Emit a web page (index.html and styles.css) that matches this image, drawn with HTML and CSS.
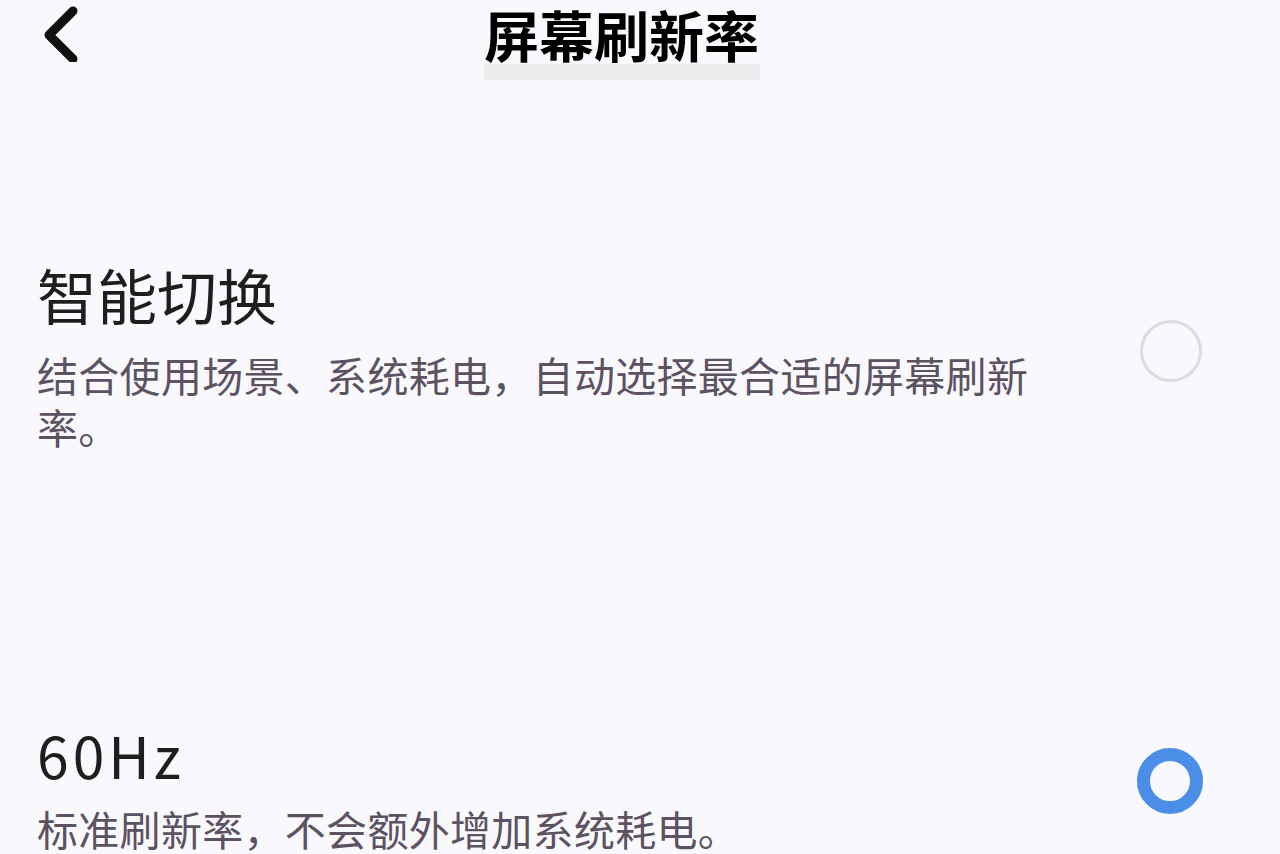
FILE: index.html
```html
<!DOCTYPE html>
<html lang="zh-CN">
<head>
    <meta charset="UTF-8">
    <meta name="viewport" content="width=device-width, initial-scale=1.0">
    <title>屏幕刷新率</title>
    <link rel="stylesheet" href="styles.css">
</head>
<body>
    <div class="screen">
        <header class="topbar">
            <button class="back" aria-label="返回">
                <svg width="36" height="56" viewBox="0 0 36 56">
                    <path d="M31 5 L7 29 L31 53" fill="none" stroke="#111" stroke-width="9" stroke-linecap="round" stroke-linejoin="round"/>
                </svg>
            </button>
            <h1 class="title">屏幕刷新率</h1>
        </header>

        <div class="options">
            <div class="option">
                <div class="option-text">
                    <h2>智能切换</h2>
                    <p>结合使用场景、系统耗电，自动选择最合适的屏幕刷新率。</p>
                </div>
                <span class="radio"></span>
            </div>
            <div class="option option-last">
                <div class="option-text">
                    <h2 class="hz">60Hz</h2>
                    <p>标准刷新率，不会额外增加系统耗电。</p>
                </div>
                <span class="radio checked"></span>
            </div>
        </div>
    </div>
</body>
</html>
```

FILE: styles.css
```css
html, body {
    margin: 0;
    padding: 0;
}
body {
    background-color: #f9f9fd;
    font-family: "Noto Sans CJK SC", "Noto Sans", sans-serif;
    color: #1c1c1c;
    overflow: hidden;
}
.screen {
    width: 1280px;
    height: 854px;
}
.topbar {
    display: flex;
    align-items: flex-start;
    padding-left: 42px;
    height: 84px;
}
.back {
    background: none;
    border: none;
    padding: 0;
    margin: 6px 0 0;
    width: 36px;
    height: 56px;
}
.title {
    margin: 0 0 0 406px;
    padding: 1px 1px 15px 0;
    font-size: 55px;
    line-height: 64px;
    font-weight: 700;
    color: #000;
    white-space: nowrap;
    /* grey strip under the heading */
    background: linear-gradient(to bottom, transparent 64px, #ececee 64px);
}
.options {
    padding-left: 37px;
}
.option {
    display: flex;
    align-items: center;
    justify-content: space-between;
    padding-right: 78px;
    margin-top: 174px;
}
.option-last {
    margin-top: 266px;
}
.option-text h2 {
    margin: 0;
    font-size: 60px;
    line-height: 72px;
    font-weight: 400;
    color: #1e1e1e;
}
.option-text .hz {
    font-size: 57px;
    letter-spacing: 4px;
}
.option-text p {
    margin: 18px 0 0;
    max-width: 1015px;
    font-size: 41px;
    line-height: 52px;
    letter-spacing: 0.3px;
    color: #5c5262;
}
.option-last .option-text p {
    margin-top: 12px;
}
.radio {
    flex: none;
    width: 62px;
    height: 62px;
    margin-bottom: 8px;
    border: 3px solid #dcdcde;
    border-radius: 50%;
    box-sizing: border-box;
}
.radio.checked {
    width: 66px;
    height: 66px;
    margin: 0 -1px 10px 0;
    border: 13px solid #4a8ee8;
}
```
